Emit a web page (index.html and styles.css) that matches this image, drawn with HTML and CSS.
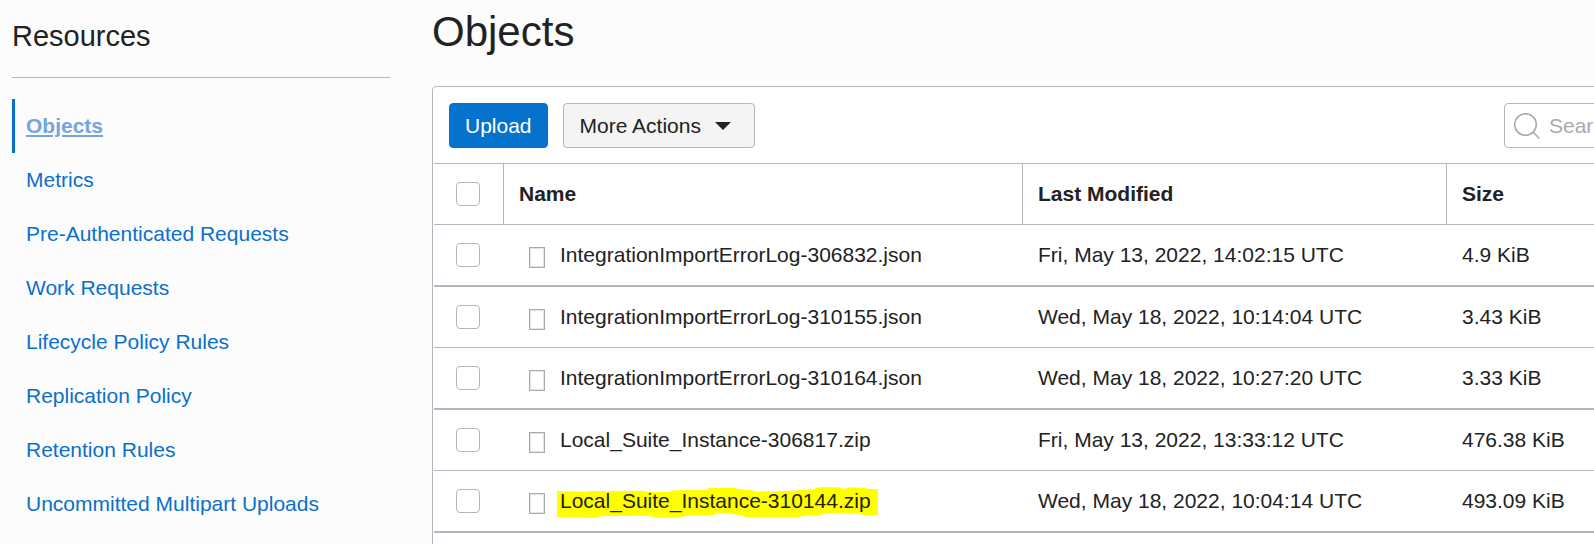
FILE: index.html
```html
<!DOCTYPE html>
<html lang="en">
<head>
  <meta charset="UTF-8">
  <title>Objects</title>
  <link rel="stylesheet" href="styles.css">
</head>
<body>
  <div class="page">
    <aside class="sidebar">
      <h2>Resources</h2>
      <nav>
        <ul class="resource-list">
          <li class="active"><a href="#objects">Objects</a></li>
          <li><a href="#metrics">Metrics</a></li>
          <li><a href="#par">Pre-Authenticated Requests</a></li>
          <li><a href="#work">Work Requests</a></li>
          <li><a href="#lifecycle">Lifecycle Policy Rules</a></li>
          <li><a href="#replication">Replication Policy</a></li>
          <li><a href="#retention">Retention Rules</a></li>
          <li><a href="#uploads">Uncommitted Multipart Uploads</a></li>
        </ul>
      </nav>
    </aside>

    <main class="content">
      <h1>Objects</h1>
      <div class="panel">
        <div class="toolbar">
          <button type="button" class="btn btn-primary">Upload</button>
          <button type="button" class="btn btn-menu">More Actions
            <svg class="caret" width="16" height="8" viewBox="0 0 16 8"><path d="M0 0h16L8 8z" fill="#222"/></svg>
          </button>
          <label class="search">
            <svg width="26" height="26" viewBox="0 0 26 26" fill="none" stroke="#aaa" stroke-width="1.5"><circle cx="11.5" cy="11.5" r="10.8"/><path d="M19 19l6.5 6.5"/></svg>
            <input type="text" placeholder="Search by prefix" aria-label="Search by prefix">
          </label>
        </div>

        <table>
          <thead>
            <tr>
              <th class="col-check"><input type="checkbox" aria-label="Select all"></th>
              <th class="col-name">Name</th>
              <th class="col-date">Last Modified</th>
              <th class="col-size">Size</th>
            </tr>
          </thead>
          <tbody>
            <tr>
              <td class="col-check"><input type="checkbox" aria-label="Select IntegrationImportErrorLog-306832.json"></td>
              <td><div class="file"><span class="file-icon"></span><span>IntegrationImportErrorLog-306832.json</span></div></td>
              <td>Fri, May 13, 2022, 14:02:15 UTC</td>
              <td>4.9 KiB</td>
            </tr>
            <tr>
              <td class="col-check"><input type="checkbox" aria-label="Select IntegrationImportErrorLog-310155.json"></td>
              <td><div class="file"><span class="file-icon"></span><span>IntegrationImportErrorLog-310155.json</span></div></td>
              <td>Wed, May 18, 2022, 10:14:04 UTC</td>
              <td>3.43 KiB</td>
            </tr>
            <tr>
              <td class="col-check"><input type="checkbox" aria-label="Select IntegrationImportErrorLog-310164.json"></td>
              <td><div class="file"><span class="file-icon"></span><span>IntegrationImportErrorLog-310164.json</span></div></td>
              <td>Wed, May 18, 2022, 10:27:20 UTC</td>
              <td>3.33 KiB</td>
            </tr>
            <tr>
              <td class="col-check"><input type="checkbox" aria-label="Select Local_Suite_Instance-306817.zip"></td>
              <td><div class="file"><span class="file-icon"></span><span>Local_Suite_Instance-306817.zip</span></div></td>
              <td>Fri, May 13, 2022, 13:33:12 UTC</td>
              <td>476.38 KiB</td>
            </tr>
            <tr>
              <td class="col-check"><input type="checkbox" aria-label="Select Local_Suite_Instance-310144.zip"></td>
              <td>
                <div class="file"><span class="file-icon"></span><mark class="highlight">
                  <svg class="marker" width="321" height="31" viewBox="381 261 963 93"><path fill="#ff0" d="M381 273L465 275L480 273L640 272L655 276H715L730 271L830 270L838 264H910L930 268L965 270L980 275L1090 272L1120 270L1150 268L1165 262H1225L1240 267L1265 262L1310 264L1312 267H1344V346L1295 345L1290 340H1190L1170 345L1115 348L1112 351H948L935 346L900 341L860 340L850 346H800L765 347L760 351L730 353H675L665 349L615 347L515 349L490 353H460L455 351H381Z"/></svg>
                  <span>Local_Suite_Instance-310144.zip</span></mark></div>
              </td>
              <td>Wed, May 18, 2022, 10:04:14 UTC</td>
              <td>493.09 KiB</td>
            </tr>
          </tbody>
        </table>
      </div>
    </main>
  </div>
</body>
</html>
```
FILE: styles.css
```css
* {
  margin: 0;
  padding: 0;
  box-sizing: border-box;
}

body {
  background: #fcfcfc;
  color: #222;
  font-family: "Liberation Sans", Arial, sans-serif;
  font-size: 21px;
  line-height: 30px;
}

.page {
  display: flex;
  gap: 42px;
  height: 100vh;
  padding-left: 12px;
  overflow: hidden;
}

.sidebar {
  flex: 0 0 378px;
  padding-top: 18px;
}

h1,
h2 {
  font-weight: normal;
}

h2 {
  font-size: 29px;
  line-height: 36px;
  padding-bottom: 23px;
  border-bottom: 1px solid #b1b7c1;
}

.resource-list {
  list-style: none;
  margin-top: 21px;
}

.resource-list li {
  padding: 12px 11px;
  border-left: 3px solid transparent;
}

.resource-list a {
  color: #0b6fcc;
  text-decoration: none;
}

.resource-list .active {
  border-left-color: #0572ce;
}

.resource-list .active a {
  color: #74a5e0;
  font-weight: bold;
  text-decoration: underline;
}

.content {
  flex: 1;
  min-width: 0;
}

h1 {
  font-size: 42px;
  line-height: 64px;
  margin-bottom: 22px;
}

/* the list is wider than the window and runs off its right side */
.panel {
  margin-right: -128px;
  padding: 0 1px 16px;
  background: #fff;
  border: 1px solid #b1b7c1;
  border-radius: 4px;
}

.toolbar {
  display: flex;
  align-items: center;
  gap: 15px;
  padding: 16px 15px 15px;
}

.btn {
  display: flex;
  align-items: center;
  height: 45px;
  padding: 0 15px;
  border: 1px solid #b1b7c1;
  border-radius: 4px;
  background: #f4f4f4;
  color: #222;
  font: inherit;
  cursor: pointer;
}

.btn-primary {
  background: #0572ce;
  border-color: #0572ce;
  color: #fff;
}

.btn-menu {
  gap: 14px;
  padding: 0 23px 0 16px;
}

.search {
  display: flex;
  align-items: center;
  gap: 9px;
  width: 201px;
  height: 45px;
  margin-left: auto;
  padding-left: 9px;
  border: 1px solid #b1b7c1;
  border-radius: 4px;
}

.search svg {
  flex: none;
}

.search input {
  width: 100%;
  min-width: 0;
  border: none;
  outline: none;
  background: none;
  font: inherit;
}

.search input::placeholder {
  color: #aaa;
}

table {
  width: 100%;
  table-layout: fixed;
  border-collapse: separate;
  border-spacing: 0;
  border-top: 1px solid #b1b7c1;
}

th,
td {
  padding: 15px;
  border-bottom: 1px solid #b1b7c1;
  text-align: left;
  white-space: nowrap;
}

th {
  border-right: 1px solid #b1b7c1;
}

th:last-child {
  border-right: none;
}

tbody tr:nth-child(odd) td {
  border-bottom-width: 2px;
}

.col-check {
  width: 70px;
  padding: 0 0 0 22px;
}

.col-name {
  width: 519px;
}

.col-date {
  width: 424px;
}

input[type="checkbox"] {
  appearance: none;
  display: block;
  width: 24px;
  height: 24px;
  border: 1px solid #b1b7c1;
  border-radius: 4px;
  background: #fff;
}

.file {
  display: flex;
  align-items: center;
  gap: 15px;
  padding-left: 10px;
}

.file-icon {
  width: 16px;
  height: 21px;
  margin-top: 4px;
  border: 1px solid #aaa;
  box-shadow: inset 0 0 0 1px #e4e4e4;
}

.highlight {
  position: relative;
  background: none;
  color: #220;
}

.highlight span {
  position: relative;
}

.marker {
  position: absolute;
  left: -3px;
  top: 1px;
}
```
